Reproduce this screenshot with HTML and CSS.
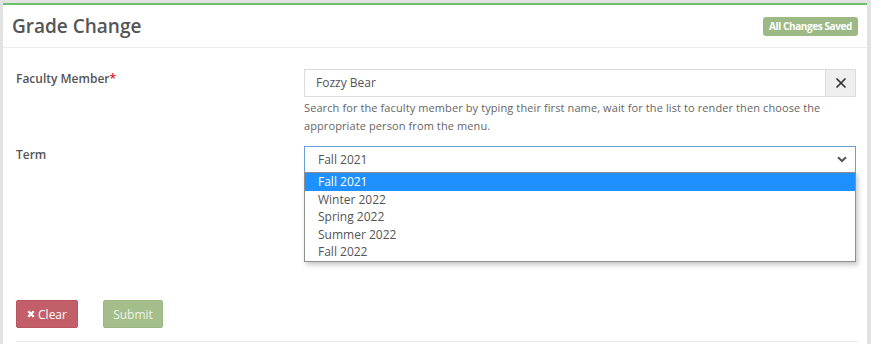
FILE: index.html
```html
<!DOCTYPE html>
<html lang="en">
<head>
<meta charset="utf-8">
<title>Grade Change</title>
<link rel="stylesheet" href="styles.css">
</head>
<body>
<div class="card">
  <div class="card-header">
    <h1 class="title">Grade Change</h1>
    <span class="badge">All Changes Saved</span>
  </div>
  <div class="card-body">
    <div class="row row-faculty">
      <label class="label">Faculty Member<span class="req">*</span></label>
      <div class="control">
        <div class="input-group">
          <div class="input">Fozzy Bear</div>
          <button class="clear-x" type="button" aria-label="Clear">
            <svg width="12" height="12" viewBox="0 0 12 12"><path d="M1.5 1.5 L10.5 10.5 M10.5 1.5 L1.5 10.5" stroke="#333" stroke-width="1.7" fill="none"/></svg>
          </button>
        </div>
        <p class="help">Search for the faculty member by typing their first name, wait for the list to render then choose the appropriate person from the menu.</p>
      </div>
    </div>
    <div class="row row-term">
      <label class="label">Term</label>
      <div class="control">
        <div class="select">
          <span class="select-value">Fall 2021</span>
          <svg class="chevron" width="10" height="7" viewBox="0 0 10 7"><path d="M1 1.2 L5 5 L9 1.2" stroke="#555" stroke-width="2" fill="none"/></svg>
          <ul class="dropdown">
            <li class="opt active">Fall 2021</li>
            <li class="opt">Winter 2022</li>
            <li class="opt">Spring 2022</li>
            <li class="opt">Summer 2022</li>
            <li class="opt">Fall 2022</li>
          </ul>
        </div>
      </div>
    </div>
    <div class="actions">
      <button class="btn btn-clear" type="button"><svg class="btn-icon" width="8" height="8" viewBox="0 0 8 8"><path d="M1.3 1.3 L6.7 6.7 M6.7 1.3 L1.3 6.7" stroke="#fff" stroke-width="2.3" fill="none"/></svg>Clear</button>
      <button class="btn btn-submit" type="button">Submit</button>
    </div>
    <div class="separator"></div>
  </div>
</div>
</body>
</html>
```

FILE: styles.css
```css
html, body {
  margin: 0;
  padding: 0;
}
body {
  background: #e2e2e2;
  font-family: "Open Sans", "DejaVu Sans", sans-serif;
  color: #555;
  padding-top: 3px;
  overflow: hidden;
}
.card {
  margin: 0 4px 0 3px;
  background: #fff;
  border-top: 2px solid #6cbf6c;
  min-height: 360px;
}
.card-header {
  height: 43px;
  box-sizing: border-box;
  display: flex;
  align-items: center;
  justify-content: space-between;
  padding: 0 9px 0 9px;
  border-bottom: 1px solid #ececec;
}
.title {
  margin: 0;
  font-size: 19px;
  font-weight: 600;
  line-height: 27px;
  color: #555;
}
.badge {
  display: inline-block;
  height: 19px;
  line-height: 19px;
  padding: 0 6px;
  background: #9dba86;
  color: #fff;
  font-size: 10px;
  font-weight: 700;
  letter-spacing: -0.4px;
  border-radius: 3px;
}
.card-body {
  padding: 21px 11px 0 13px;
}
.row {
  display: grid;
  grid-template-columns: 288px 1fr;
}
.label {
  font-size: 12px;
  font-weight: 600;
  line-height: 18px;
  color: #555;
  padding-top: 1px;
}
.row-term .label {
  padding-top: 0;
}
.req {
  color: #e8141e;
}
.input-group {
  display: flex;
  height: 28px;
}
.input {
  flex: 1;
  box-sizing: border-box;
  height: 28px;
  border: 1px solid #dcdcdc;
  border-right: none;
  padding: 0 11px;
  font-size: 12px;
  line-height: 26px;
  color: #555;
}
.clear-x {
  width: 31px;
  height: 28px;
  box-sizing: border-box;
  border: 1px solid #dcdcdc;
  background: #efefef;
  padding: 0;
  display: flex;
  align-items: center;
  justify-content: center;
}
.help {
  margin: 0 0 11px 0;
  font-size: 11px;
  letter-spacing: 0.1px;
  line-height: 18px;
  color: #666;
  padding-top: 2px;
}
.select {
  position: relative;
  height: 27px;
  box-sizing: border-box;
  border: 1px solid #6a9fd6;
  display: flex;
  align-items: center;
  padding: 0 8px 0 13px;
}
.select-value {
  flex: 1;
  font-size: 12px;
  color: #555;
}
.chevron {
  display: block;
}
.dropdown {
  position: absolute;
  top: 100%;
  left: -1px;
  right: -1px;
  margin: 0;
  padding: 0;
  list-style: none;
  background: #fff;
  border: 1px solid #8e8e8e;
  box-shadow: 2px 3px 5px rgba(0, 0, 0, 0.22);
}
.opt {
  height: 17.6px;
  line-height: 17.6px;
  padding-left: 13px;
  font-size: 12px;
  color: #555;
}
.opt.active {
  background: #1e90ff;
  color: #fff;
}
.actions {
  display: flex;
  gap: 25px;
  margin-top: 127px;
}
.btn {
  height: 28px;
  border: 1px solid transparent;
  border-radius: 2px;
  font-family: "Open Sans", "DejaVu Sans", sans-serif;
  font-size: 12px;
  color: #fff;
  display: flex;
  align-items: center;
  justify-content: center;
  padding: 0;
}
.btn-clear {
  width: 62px;
  background: #c25f69;
  border-color: #b85560;
}
.btn-icon {
  margin-right: 3px;
}
.btn-submit {
  width: 60px;
  background: #a3be8b;
  border-color: #9bb683;
  color: #eef3e8;
}
.separator {
  margin-top: 13px;
  margin-right: -2px;
  border-top: 1px solid #e8e8e8;
}
```
